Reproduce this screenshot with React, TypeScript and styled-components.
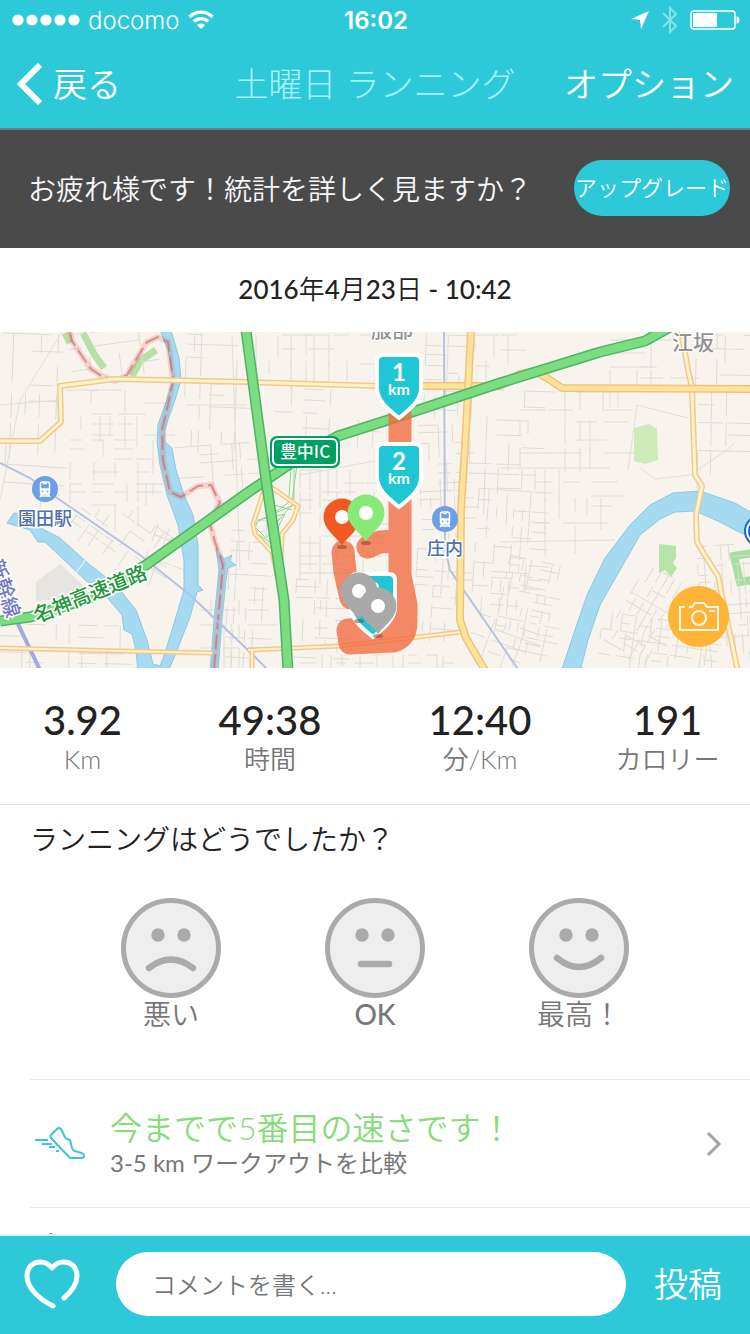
import React, { useState } from "react";
import styled, { createGlobalStyle } from "styled-components";

const teal = "#2ec9d8";
const jp = `Lato, "Noto Sans CJK JP", sans-serif`;

const GlobalStyle = createGlobalStyle`
  * { box-sizing: border-box; }
  body { margin: 0; background: #fff; font-family: ${jp}; color: #222; }
  button, input { font: inherit; color: inherit; border: 0; padding: 0; background: none; }
  button { cursor: pointer; }
  h1, h2, p, dl, dt, dd { margin: 0; font-weight: inherit; }
  svg { display: block; flex: none; }
`;

const Screen = styled.div`
  height: 100vh;
  display: flex;
  flex-direction: column;
`;

const Header = styled.header`
  flex: none;
  background: ${teal};
  color: #fff;
  border-bottom: 2px solid #5f8286;
`;

const StatusBar = styled.div`
  display: grid;
  grid-template-columns: 1fr auto 1fr;
  align-items: center;
  height: 40px;
  padding: 0 10px 0 12px;
  font-family: Inter, sans-serif;
  font-size: 24px;
`;

const StatusGroup = styled.div<{ $end?: boolean }>`
  display: flex;
  align-items: center;
  gap: ${(p) => (p.$end ? 11 : 8)}px;
  justify-content: ${(p) => (p.$end ? "flex-end" : "flex-start")};
`;

const Carrier = styled.span`
  font-weight: 300;
`;

const Clock = styled.time`
  font-weight: 600;
`;

const NavBar = styled.nav`
  display: grid;
  grid-template-columns: 1fr auto 1fr;
  align-items: center;
  height: 88px;
  padding: 0 16px;
  font-size: 34px;
  font-weight: 350;
  line-height: 40px;
`;

const NavButton = styled.button<{ $end?: boolean }>`
  display: flex;
  align-items: center;
  gap: 10px;
  white-space: nowrap;
  justify-self: ${(p) => (p.$end ? "end" : "start")};
`;

const Title = styled.h1`
  font-size: 34px;
  font-weight: 300;
  color: #a5f1f6;
  white-space: nowrap;
`;

const Content = styled.main`
  flex: 1;
  min-height: 0;
  overflow: hidden;
`;

const Banner = styled.section`
  display: flex;
  align-items: center;
  justify-content: space-between;
  height: 118px;
  padding: 0 20px 2px 28px;
  background: #4a4a4a;
  color: #f6f6fa;
  font-size: 28px;
  font-weight: 350;
  white-space: nowrap;
`;

const UpgradeButton = styled.button`
  width: 156px;
  height: 56px;
  padding-bottom: 4px;
  border-radius: 28px;
  background: ${teal};
  color: #fff;
  font-size: 22px;
  display: flex;
  align-items: center;
  justify-content: center;
`;

const DateLine = styled.p`
  height: 84px;
  line-height: 82px;
  text-align: center;
  font-size: 26px;
  font-weight: 500;
`;

const DateUnit = styled.span`
  font-weight: 350;
`;

const MapPanel = styled.section`
  position: relative;
  height: 336px;
  overflow: hidden;
`;

const CameraButton = styled.button`
  position: absolute;
  right: 21px;
  bottom: 21px;
  width: 61px;
  height: 61px;
  border-radius: 50%;
  background: #ffb437;
  display: grid;
  place-items: center;
`;

const Stats = styled.dl`
  display: grid;
  grid-template-columns: 11fr 14fr 14fr 11fr;
  height: 137px;
  padding-top: 28px;
  border-bottom: 1px solid #e6e6e6;
  text-align: center;
`;

const Stat = styled.div`
  display: flex;
  flex-direction: column-reverse;
  justify-content: flex-end;
`;

const StatValue = styled.dd`
  font-size: 40px;
  line-height: 48px;
  font-weight: 500;
`;

const StatLabel = styled.dt`
  font-size: 26px;
  line-height: 30px;
  font-weight: 350;
  color: #777;
`;

const Rating = styled.section`
  height: 274px;
  padding-top: 14px;
`;

const Question = styled.h2`
  padding-left: 30px;
  font-size: 28px;
  line-height: 40px;
  font-weight: 350;
`;

const Faces = styled.div`
  display: flex;
  justify-content: center;
  gap: 104px;
  padding-top: 39px;
`;

const FaceButton = styled.button`
  display: flex;
  flex-direction: column;
  align-items: center;
  width: 100px;
  font-size: 28px;
  line-height: 32px;
  color: #777;
  white-space: nowrap;
`;

const FaceName = styled.span<{ $latin?: boolean }>`
  font-weight: ${(p) => (p.$latin ? 500 : 350)};
`;

const CompareRow = styled.a`
  display: flex;
  align-items: center;
  gap: 24px;
  height: 129px;
  margin-left: 30px;
  padding: 0 28px 0 4px;
  border-top: 1px solid #e6e6e6;
  border-bottom: 1px solid #e6e6e6;
  color: #777;
  text-decoration: none;
`;

const CompareText = styled.span`
  flex: 1;
  display: flex;
  flex-direction: column;
  font-weight: 400;
  font-size: 24px;
  line-height: 32px;
`;

const Highlight = styled.span`
  font-size: 32px;
  font-weight: 350;
  line-height: 38px;
  color: #86dc78;
`;

const NotesTitle = styled.h2`
  padding: 16px 30px 0;
  font-size: 28px;
  line-height: 40px;
  font-weight: 350;
`;

const CommentBar = styled.form`
  flex: none;
  display: flex;
  align-items: center;
  height: 100px;
  padding: 0 28px 2px 24px;
  background: ${teal};
  border-top: 2px solid #d9f3f5;
`;

const LikeButton = styled.button`
  width: 92px;
`;

const CommentInput = styled.input`
  flex: 1;
  min-width: 0;
  height: 64px;
  padding: 0 36px;
  border-radius: 32px;
  background: #fff;
  color: #222;
  font-size: 24px;
  font-weight: 350;
  &::placeholder { color: #777; opacity: 1; }
`;

const PostButton = styled.button`
  margin-left: 28px;
  padding-bottom: 4px;
  color: #fff;
  font-size: 34px;
  font-weight: 350;
  white-space: nowrap;
`;

/* Street clusters: x, y, width, height, block size, rotation */
const clusters: number[][] = [
  [0, 4, 60, 100, 15, 2], [66, 60, 90, 50, 13, 0], [70, 0, 80, 45, 12, -8],
  [5, 115, 60, 40, 18, 4], [70, 110, 85, 70, 11, 0], [185, 5, 58, 110, 12, 2],
  [176, 115, 75, 40, 12, -4], [75, 178, 95, 48, 9, 35], [0, 295, 130, 42, 13, 1],
  [150, 200, 40, 40, 14, 20], [228, 190, 40, 140, 11, 3], [200, 270, 60, 60, 12, 0],
  [256, 5, 115, 45, 13, 0], [275, 60, 100, 40, 14, 3], [425, 5, 40, 80, 10, 2],
  [300, 140, 80, 110, 11, 0], [295, 250, 50, 80, 10, 2], [420, 95, 42, 110, 9, -2],
  [415, 220, 48, 80, 9, 4], [300, 325, 160, 12, 9, 0], [475, 5, 65, 40, 13, 0],
  [470, 60, 55, 110, 13, 2], [520, 62, 105, 70, 14, 0], [475, 160, 55, 120, 9, 4],
  [535, 140, 75, 60, 14, 0], [500, 230, 55, 95, 8, 12], [610, 10, 65, 40, 15, 0],
  [696, 5, 54, 48, 12, 1], [698, 62, 52, 80, 15, 1], [622, 240, 50, 90, 9, 30],
  [600, 290, 125, 46, 9, 8], [700, 215, 50, 110, 9, -4], [470, 290, 50, 40, 11, 20],
];

function buildStreets() {
  let seed = 7;
  const rnd = () => (seed = (seed * 16807) % 2147483647) / 2147483647;
  return clusters.map(([x, y, w, h, s, a], i) => {
    let d = "";
    for (let py = 0; py <= h; py += s * (0.7 + rnd() * 0.6)) {
      for (let px = 0; px < w; px += s * 2) {
        if (rnd() < 0.5) d += `M${(x + px).toFixed(0)} ${(y + py).toFixed(0)}h${Math.round(s * (1 + rnd() * 1.5))}`;
      }
    }
    for (let px = 0; px <= w; px += s * (0.6 + rnd() * 0.6)) {
      for (let py = 0; py < h; py += s * 2) {
        if (rnd() < 0.55) d += `M${(x + px).toFixed(0)} ${(y + py).toFixed(0)}v${Math.round(s * (1 + rnd() * 1.5))}`;
      }
    }
    return <path key={i} d={d} transform={`rotate(${a} ${x + w / 2} ${y + h / 2})`} />;
  });
}

const streets = buildStreets();

function Road({ d, w, edge, fill }: { d: string; w: number; edge: string; fill: string }) {
  return (
    <g fill="none" strokeLinejoin="round">
      <path d={d} stroke={edge} strokeWidth={w} />
      <path d={d} stroke={fill} strokeWidth={w - 3} />
    </g>
  );
}

function Shield({ x, y, n, unit }: { x: number; y: number; n: string; unit?: string }) {
  return (
    <g transform={`translate(${x} ${y})`}>
      <path d="M6 0h32q6 0 6 6v27c0 13-12 22-22 30c-10-8-22-17-22-30V6q0-6 6-6z" fill="#1fc6d6" stroke="#fff" strokeWidth="4" />
      <g fill="#fff" fontWeight="700" textAnchor="middle" fontFamily="Lato, sans-serif">
        <text x="22" y="26" fontSize="24">{n}</text>
        {unit && <text x="22" y="40" fontSize="16">{unit}</text>}
      </g>
    </g>
  );
}

function Pin({ x, y, color }: { x: number; y: number; color: string }) {
  return (
    <g transform={`translate(${x} ${y})`}>
      <ellipse cx="0" cy="30" rx="5" ry="2" fill="#7a3b25" opacity=".5" />
      <path d="M0 28C-5 21-18.500 12-18.500 0a18.500 18.500 0 0 1 37 0C18.500 12 5 21 0 28z" fill={color} />
      <circle r="7" fill="#fff" />
    </g>
  );
}

function Station({ x, y, name }: { x: number; y: number; name: string }) {
  return (
    <g>
      <circle cx={x} cy={y} r="13" fill="#6d9fe9" />
      <g transform={`translate(${x} ${y})`} fill="none" stroke="#fff" strokeWidth="1.500">
        <rect x="-4.500" y="-7" width="9" height="12" rx="2" />
        <path d="M-2 -5.500h4" />
        <path d="M-4 0h8v4h-8z" fill="#fff" />
        <path d="M-3 5l-2 3M3 5l2 3M-4 7h8" />
        <circle cx="-2.500" cy="2.500" r=".6" stroke="#6d9fe9" strokeWidth="1" />
        <circle cx="2.500" cy="2.500" r=".6" stroke="#6d9fe9" strokeWidth="1" />
      </g>
      <text x={x} y={y + 36} fontSize="18" fontWeight="500" textAnchor="middle" fill="#4d70ad" stroke="#fff" strokeWidth="3" paintOrder="stroke">{name}</text>
    </g>
  );
}

const boundary =
  "M70 2L72 11L90 38L100 45L115 51L127 45L137 28L147 12L158 7L168 12L173 50L168 75L162 100L163 130L170 162L181 167L198 156L211 155L220 173L209 190L215 212L223 235L218 290L214 340";

function RunMap() {
  return (
    <svg width="100%" height="100%" viewBox="0 2 750 336" preserveAspectRatio="xMidYMid slice" fontFamily={`"Noto Sans CJK JP", sans-serif`} role="img" aria-label="ランニングの地図">
      <rect y="0" width="750" height="340" fill="#f8f4ed" />
      <path d="M36 252L60 234L86 258L74 268L36 271z" fill="#e6e4e1" />
      <g fill="#cdebb6">
        <path d="M634 98L649 94L657 99L658 130L645 134L634 131z" />
        <path d="M659 214L676 216V228L673 233L677 238L671 247L665 240L659 243z" fill="#b6e3a8" />
      </g>
      <path d="M83 3L94 24L104 38M132 46L140 31L156 20M65 3L70 13" fill="none" stroke="#b7dfa6" strokeWidth="7" />
      <path d="M752 223L734 226L740 252L752 250" fill="none" stroke="#a9dca0" strokeWidth="8" />
      <g fill="none" stroke="#dedbd5" strokeWidth="1">{streets}</g>
      <path d="M0 75L60 70M186 75h60M300 145L380 130M500 138h110M637 75L688 88M637 75L628 140M640 138L655 149L690 145L720 125L735 113M500 212L615 210M232 5L240 240M62 2L20 70L0 170" fill="none" stroke="#e0ded9" strokeWidth="1" />
      <g fill="#a5daf0" stroke="#8cc8e4" strokeWidth="1">
        <path d="M160 0L168 20L173 50L166 72L158 95L157 112L160 135L167 165L178 195L184 230L184 260L172 300L164 326L160 336L153 334L147 310L136 280L116 255L90 235L60 208L35 195L22 184L14 183L7 193L30 200L38 212L45 212L62 228L85 250L105 265L122 285L124 300L132 304L136 320L138 342H168L178 318L190 287L197 262L203 260L198 255V215L193 185L184 165L176 140L172 118L165 112V100L168 90L175 70L181 50L179 28L171 0z" />
        <path d="M561 342L575 300L587 265L605 228L630 195L650 175L673 163L700 161L735 173L752 183V208L735 200L720 192L702 184L695 181L675 182L660 189L640 205L620 240L600 275L588 310L580 342z" />
        <path d="M216 218L224 229L232 225L230 231L236 235L228 238L226 250L222 290L218 342H210L214 290L219 240z" />
      </g>
      <path d="M76 243L86 229" stroke="#fff" strokeWidth="1" />
      <path d={boundary} fill="none" stroke="#e2574f" strokeOpacity=".2" strokeWidth="6" />
      <path d={boundary} fill="none" stroke="#c96a68" strokeOpacity=".65" strokeWidth="2" strokeDasharray="15 5" />
      <g fill="none" stroke="#b3c2e4" strokeWidth="2">
        <path d="M0 133L30 148L60 170L140 225L190 265L250 322L270 342" />
        <path d="M444 2L445 218L450 240L500 313L520 342" />
        <path d="M0 262L17 292L40 340" stroke="#a3a8df" strokeWidth="4" />
      </g>
      <g fill="none" stroke="#8fd78c" strokeWidth="1">
        <path d="M297 135L292 170L278 180L257 192L254 202L270 212M291 138L289 166L292 175L270 200M268 155L274 175L292 180M258 190L285 184L270 212" />
        <path d="M294 137V175L268 186M256 198L266 208L280 188" />
      </g>
      <Road d="M0 111H40L61 92L60 56L115 49L248 52L380 56H425" w={6} edge="#f3c88f" fill="#fff3c9" />
      <Road d="M0 318L120 321L212 323" w={5} edge="#f3c88f" fill="#fff3c9" />
      <Road d="M248 320L340 316L461 302M252 320V342" w={5} edge="#f3c88f" fill="#fff3c9" />
      <Road d="M268 155L298 176L293 190L282 204L281 230M264 160L253 194L255 204L272 222L278 250" w={5} edge="#f3c88f" fill="#fff3c9" />
      <Road d="M681 0L688 40L692 58L693 90L695 145L702 156L696 185L697 212L704 224L718 246L725 280L738 342" w={6} edge="#f3c88f" fill="#fff3c9" />
      <Road d="M420 56H500L520 44L535 41L547 48L562 58L752 59" w={8} edge="#f2c27c" fill="#ffe39a" />
      <Road d="M471 0L466 100L461 180L460 290L466 308L486 342" w={8} edge="#f2c27c" fill="#ffe39a" />
      <Road d="M0 291L30 287L90 268L146 235L250 161L300 127L338 106L388 90L500 53L600 22L645 11L672 -4" w={11} edge="#4cb468" fill="#7bdc80" />
      <Road d="M246 0L266 150L284 270L288 342" w={11} edge="#4cb468" fill="#7bdc80" />

      <g opacity=".78" fill="none" stroke="#f16a40" strokeWidth="23" strokeLinecap="round" strokeLinejoin="round">
        <path d="M400 85V245L406 275V292Q406 308 393 311L350 313L348 300L392 298" />
        <path d="M398 211L380 212L368 217M343 222L345 242L351 268" />
      </g>

      <g fontSize="21" fontWeight="500" fill="#929292" stroke="#fff" strokeWidth="2" paintOrder="stroke" textAnchor="middle">
        <text x="392" y="7">服部</text>
        <text x="693" y="20">江坂</text>
      </g>
      <text transform="translate(37 293) rotate(-22)" fontSize="20" fontWeight="500" fill="#23963c" stroke="#fff" strokeWidth="3" paintOrder="stroke">名神高速道路</text>
      <text transform="translate(7 289) rotate(72)" textAnchor="end" fontSize="20" fontWeight="500" fill="#7478c4" stroke="#fff" strokeWidth="3" paintOrder="stroke">新幹線</text>
      <rect x="270" y="106" width="70" height="32" rx="7" fill="#00a062" />
      <rect x="273" y="109" width="64" height="26" rx="5" fill="none" stroke="#fff" strokeWidth="2" />
      <text x="305" y="128" fontSize="17" fontWeight="500" fill="#fff" textAnchor="middle">豊中IC</text>
      <Station x={45} y={159} name="園田駅" />
      <Station x={445} y={189} name="庄内" />
      <circle cx="760" cy="201" r="16" fill="#1b62d0" />
      <circle cx="760" cy="201" r="13" fill="#1b62d0" stroke="#fff" strokeWidth="2" />

      <Shield x={377} y={25} n="1" unit="km" />
      <Shield x={377} y={114} n="2" unit="km" />
      <Shield x={351} y={244} n="3" />
      <Pin x={342} y={187} color="#f05a22" />
      <Pin x={366} y={183} color="#88ea76" />
      <Pin x={359} y={261} color="#a9a9a9" />
      <Pin x={378} y={276} color="#a9a9a9" />
    </svg>
  );
}

const mouths = {
  sad: "M28 70Q50 53 72 70",
  flat: "M36 66H64",
  happy: "M28 60Q50 78 72 60",
};

function Face({ mood }: { mood: keyof typeof mouths }) {
  return (
    <svg width="100" height="100" viewBox="0 0 100 100" aria-hidden="true">
      <circle cx="50" cy="50" r="47.500" fill="#eee" stroke="#aaa" strokeWidth="5" />
      <circle cx="37" cy="37" r="6.700" fill="#aaa" />
      <circle cx="63" cy="37" r="6.700" fill="#aaa" />
      <path d={mouths[mood]} fill="none" stroke="#aaa" strokeWidth="6.500" strokeLinecap="round" />
    </svg>
  );
}

const stats = [
  { value: "3.92", label: "Km" },
  { value: "49:38", label: "時間" },
  { value: "12:40", label: "分/Km" },
  { value: "191", label: "カロリー" },
];

const moods: { mood: keyof typeof mouths; name: string }[] = [
  { mood: "sad", name: "悪い" },
  { mood: "flat", name: "OK" },
  { mood: "happy", name: "最高！" },
];

export default function App() {
  const [comment, setComment] = useState("");
  return (
    <Screen>
      <GlobalStyle />
      <Header>
        <StatusBar>
          <StatusGroup>
            <svg width="68" height="12" viewBox="0 0 68 12" fill="#fff" aria-hidden="true">
              {[6, 20, 34, 48, 62].map((cx) => <circle key={cx} cx={cx} cy="6" r="5.600" />)}
            </svg>
            <Carrier>docomo</Carrier>
            <svg width="26" height="20" viewBox="0 0 26 20" fill="none" stroke="#fff" strokeWidth="3.400" aria-hidden="true">
              <path d="M1.500 7C8 0.500 18 0.500 24.500 7" />
              <path d="M5.800 11.600C10 7.600 16 7.600 20.200 11.600" />
              <path d="M13 19L9 15C11.200 13 14.800 13 17 15z" fill="#fff" stroke="none" />
            </svg>
          </StatusGroup>
          <Clock>16:02</Clock>
          <StatusGroup $end>
            <svg width="20" height="20" viewBox="0 0 20 20" fill="#fff" aria-hidden="true">
              <path d="M19 1L11 19L10 10L1 9z" />
            </svg>
            <svg width="18" height="28" viewBox="0 0 18 28" fill="none" stroke="#86e2ea" strokeWidth="2" aria-hidden="true">
              <path d="M2 7L15 20L9 26V2L15 8L2 21" />
            </svg>
            <svg width="50" height="20" viewBox="0 0 50 20" aria-hidden="true">
              <rect x="1" y="1" width="44" height="18" rx="3" fill="none" stroke="#fff" strokeWidth="1.500" />
              <rect x="3" y="3" width="24" height="14" fill="#fff" />
              <path d="M46.500 6.500q3 0 3 3.500t-3 3.500z" fill="#fff" />
            </svg>
          </StatusGroup>
        </StatusBar>
        <NavBar>
          <NavButton type="button">
            <svg width="27" height="42" viewBox="0 0 27 42" fill="none" stroke="#fff" strokeWidth="6" aria-hidden="true">
              <path d="M24 2L5 21L24 40" />
            </svg>
            戻る
          </NavButton>
          <Title>土曜日 ランニング</Title>
          <NavButton type="button" $end>オプション</NavButton>
        </NavBar>
      </Header>

      <Content>
        <Banner>
          <p>お疲れ様です！統計を詳しく見ますか？</p>
          <UpgradeButton type="button">アップグレード</UpgradeButton>
        </Banner>
        <DateLine>
          2016<DateUnit>年</DateUnit>4<DateUnit>月</DateUnit>23<DateUnit>日</DateUnit> - 10:42
        </DateLine>
        <MapPanel>
          <RunMap />
          <CameraButton type="button" aria-label="写真を追加">
            <svg width="40" height="30" viewBox="0 0 40 30" fill="none" stroke="#fff8e6" strokeWidth="2" aria-hidden="true">
              <path d="M6 5H1V28H39V5H28L25 1H16L13 5H10" />
              <circle cx="20" cy="16" r="7" />
              <path d="M30 9H36" />
            </svg>
          </CameraButton>
        </MapPanel>
        <Stats>
          {stats.map((s) => (
            <Stat key={s.label}>
              <StatLabel>{s.label}</StatLabel>
              <StatValue>{s.value}</StatValue>
            </Stat>
          ))}
        </Stats>
        <Rating>
          <Question>ランニングはどうでしたか？</Question>
          <Faces>
            {moods.map((m) => (
              <FaceButton key={m.mood} type="button">
                <Face mood={m.mood} />
                <FaceName $latin={m.mood === "flat"}>{m.name}</FaceName>
              </FaceButton>
            ))}
          </Faces>
        </Rating>
        <CompareRow href="#compare">
          <svg width="52" height="36" viewBox="0 0 52 36" fill="none" stroke="#3fc3d3" strokeWidth="2" aria-hidden="true">
            <path d="M23 3Q25 1 27 3L30 9Q31 13 36 14L38 22Q39 25 44 26Q50 27 50 30Q50 32 47 32H37Q36 32 35 31L17 12Q16 10 17 9z" strokeLinejoin="round" />
            <path d="M1 14H14M8 18H18M15 21H21M22 25H25" />
          </svg>
          <CompareText>
            <Highlight>今までで5番目の速さです！</Highlight>
            3-5 km ワークアウトを比較
          </CompareText>
          <svg width="16" height="26" viewBox="0 0 16 26" fill="none" stroke="#a3a3a3" strokeWidth="3" aria-hidden="true">
            <path d="M2 2L13 13L2 24" />
          </svg>
        </CompareRow>
        <NotesTitle>メモ</NotesTitle>
      </Content>

      <CommentBar onSubmit={(e) => e.preventDefault()}>
        <LikeButton type="button" aria-label="いいね">
          <svg width="56" height="52" viewBox="0 0 56 52" fill="none" stroke="#fff" strokeWidth="5" aria-hidden="true">
            <path d="M29 48C17 42 3 31 3 18C3 9 9 4 16 4C21 4 25 6 28 10C31 6 35 4 40 4C47 4 53 9 53 18C53 27 47 34 40 40" strokeLinejoin="round" strokeLinecap="round" />
          </svg>
        </LikeButton>
        <CommentInput aria-label="コメント" placeholder="コメントを書く..." value={comment} onChange={(e) => setComment(e.target.value)} />
        <PostButton type="submit">投稿</PostButton>
      </CommentBar>
    </Screen>
  );
}
